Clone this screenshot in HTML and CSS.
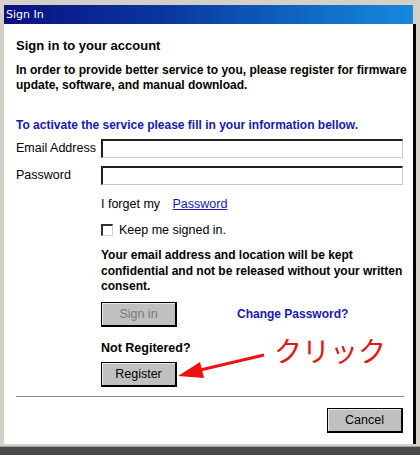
FILE: index.html
```html
<!DOCTYPE html>
<html>
<head>
<meta charset="utf-8">
<link rel="stylesheet" href="styles.css">
</head>
<body>
<div class="window">
  <div class="titlebar">Sign In</div>
  <div class="content">
    <h1 class="heading">Sign in to your account</h1>
    <p class="intro">In order to provide better service to you, please register for firmware<br>update, software, and manual download.</p>
    <p class="notice">To activate the service please fill in your information bellow.</p>
    <div class="form">
      <span class="label">Email Address</span>
      <span class="field"></span>
      <span class="label">Password</span>
      <span class="field"></span>
      <span></span>
      <div class="forget">I forget my <a class="link">Password</a></div>
      <span></span>
      <div class="keep"><span class="checkbox"></span>Keep me signed in.</div>
      <span></span>
      <p class="privacy">Your email address and location will be kept<br>confidential and not be released without your written<br>consent.</p>
      <span></span>
      <div class="actions">
        <button class="btn btn-disabled">Sign in</button>
        <a class="change">Change Password?</a>
      </div>
      <span></span>
      <div class="reg">
        <div class="reg-title">Not Regitered?</div>
        <button class="btn">Register</button>
        <svg class="arrow" width="90" height="30" viewBox="0 0 90 30">
          <line x1="86" y1="3" x2="18" y2="19" stroke="#ee1010" stroke-width="3"/>
          <polygon points="0,24 22,10 26,26" fill="#ee1010"/>
        </svg>
        <span class="click">クリック</span>
      </div>
    </div>
    <div class="divider"></div>
    <div class="footer"><button class="btn">Cancel</button></div>
  </div>
  <div class="bottom"></div>
</div>
</body>
</html>
```
FILE: styles.css
```css
html, body {
  margin: 0;
  padding: 0;
  background: #d4d0c8;
}
.window {
  width: 420px;
  height: 455px;
  box-sizing: border-box;
  background: #d4d0c8;
  padding: 5px 4px 0 4px;
  display: flex;
  flex-direction: column;
  font-family: "Liberation Sans", Arial, sans-serif;
  font-size: 12px;
  color: #000;
}
.titlebar {
  height: 19px;
  width: 409px;
  background: linear-gradient(to right, #0a1080 0%, #0a38a0 40%, #1070cc 80%, #1888dc 100%);
  color: #fff;
  font-family: "DejaVu Sans", sans-serif;
  font-size: 11px;
  line-height: 19px;
  padding-left: 2px;
  box-sizing: border-box;
}
.content {
  flex: 1;
  background: #fff;
  border-right: 3px solid #000;
  box-shadow: 2px 0 0 #d4d0c8;
  padding: 0 0 0 12px;
  box-sizing: content-box;
  position: relative;
  display: flex;
  flex-direction: column;
  margin-bottom: 2px;
  width: 397px;
}
.heading {
  margin: 14px 0 0 0;
  font-size: 13px;
  font-weight: bold;
  line-height: 16px;
}
.intro {
  margin: 9px 0 0 0;
  font-weight: bold;
  line-height: 15px;
}
.notice {
  margin: 24px 0 0 0;
  font-weight: bold;
  color: #1818b0;
  line-height: 16px;
}
.form {
  display: grid;
  grid-template-columns: 85px 302px;
  row-gap: 0;
  margin-top: 6px;
  align-items: start;
}
.label {
  font-size: 12.5px;
  line-height: 19px;
  height: 19px;
}
.form .label:nth-of-type(3) {
  margin-top: 8px;
}
.field {
  height: 19px;
  box-sizing: border-box;
  border-top: 2px solid #202020;
  border-left: 2px solid #202020;
  border-right: 1px solid #c8c8c8;
  border-bottom: 1px solid #c8c8c8;
  background: #fff;
}
.field:nth-of-type(4) {
  margin-top: 8px;
}
.forget {
  margin-top: 11px;
  font-size: 12.5px;
  line-height: 16px;
}
.link {
  color: #1818b0;
  text-decoration: underline;
  margin-left: 9px;
}
.keep {
  margin-top: 11px;
  font-size: 12.5px;
  line-height: 14px;
  display: flex;
  align-items: center;
}
.checkbox {
  width: 12px;
  height: 12px;
  box-sizing: border-box;
  border-top: 2px solid #303030;
  border-left: 2px solid #303030;
  border-right: 1px solid #d0d0d0;
  border-bottom: 1px solid #d0d0d0;
  margin-right: 6px;
}
.privacy {
  margin: 11px 0 0 0;
  font-weight: bold;
  line-height: 15.5px;
}
.actions {
  margin-top: 7px;
  display: flex;
  align-items: center;
}
.btn {
  width: 76px;
  height: 25px;
  box-sizing: border-box;
  background: #c0c0c0;
  border-top: 1px solid #000;
  border-left: 1px solid #000;
  border-right: 2px solid #000;
  border-bottom: 2px solid #000;
  box-shadow: inset 1px 1px 0 #e8e8e8;
  font-family: "Liberation Sans", Arial, sans-serif;
  font-size: 12.5px;
  color: #000;
  padding: 0;
  margin: 0;
}
.btn-disabled {
  color: #7a7a7a;
}
.change {
  margin-left: 60px;
  color: #1818b0;
  font-weight: bold;
}
.reg {
  position: relative;
  margin-top: 14px;
}
.reg-title {
  font-weight: bold;
  font-size: 12.5px;
  line-height: 15px;
  margin-bottom: 6px;
}
.arrow {
  position: absolute;
  left: 77px;
  top: 11px;
}
.click {
  position: absolute;
  left: 173px;
  top: -8px;
  font-family: "Noto Sans CJK JP", sans-serif;
  font-size: 28px;
  color: #e01818;
  white-space: nowrap;
  line-height: 34px;
}
.divider {
  margin-top: 9px;
  width: 388px;
  height: 1px;
  background: #8a8a8a;
}
.footer {
  display: flex;
  justify-content: flex-end;
  padding-right: 10px;
  margin-top: 11px;
}
.bottom {
  height: 8px;
  margin: 0 -4px;
  background: #4a4a4a;
  border-top: 1px solid #a0a0a0;
}
```
